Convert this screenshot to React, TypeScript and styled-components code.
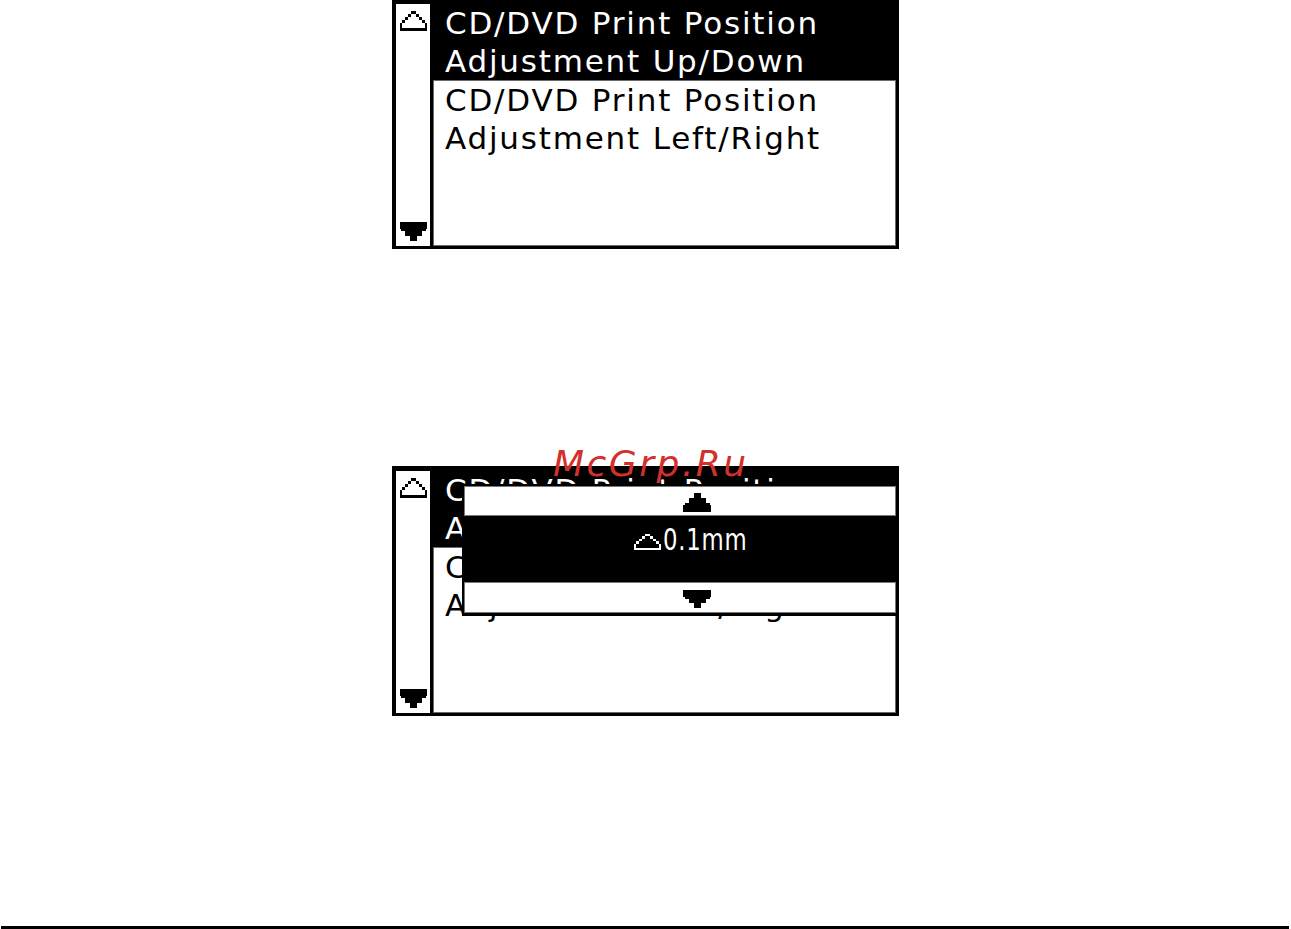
import React from "react";
import styled, { createGlobalStyle } from "styled-components";

const GlobalStyle = createGlobalStyle`
  html, body {
    margin: 0;
    padding: 0;
    background: #ffffff;
  }
  body {
    font-family: "DejaVu Sans", "Noto Sans", sans-serif;
  }
`;

const Page = styled.div`
  width: 1291px;
  height: 929px;
  display: flex;
  flex-direction: column;
  align-items: center;
  overflow: hidden;
`;

/* LCD panel: black frame, scroll track on the left, menu list on the right */
const Screen = styled.div<{ $offset: number }>`
  position: relative;
  box-sizing: border-box;
  width: 507px;
  height: 250px;
  margin-top: ${(p) => p.$offset}px;
  padding: 5px 3px 3px 4px;
  background: #000;
  display: grid;
  grid-template-columns: 34px 1fr;
`;

const ScrollTrack = styled.div`
  background: #fff;
  display: flex;
  flex-direction: column;
  justify-content: space-between;
  align-items: center;
  padding: 7px 0 5px;
  box-sizing: border-box;
`;

const MenuList = styled.div`
  display: flex;
  flex-direction: column;
  min-height: 0;
`;

const MenuItem = styled.div<{ $selected?: boolean }>`
  box-sizing: border-box;
  font-size: 31px;
  line-height: 38px;
  letter-spacing: 1.8px;
  white-space: nowrap;
  overflow: hidden;
  ${(p) =>
    p.$selected
      ? `
    flex: none;
    height: 76px;
    padding-left: 15px;
    background: #000;
    color: #fff;
  `
      : `
    flex: 1;
    margin-left: 3px;
    padding-left: 11px;
    background: #fff;
    color: #000;
    border: 1px solid #6a6a6a;
  `}
`;

const Line = styled.div`
  display: block;
`;

/* value picker that opens over the list */
const Picker = styled.div`
  position: absolute;
  left: 70px;
  top: 18px;
  right: 0;
  padding: 2px 3px 3px 2px;
  background: #000;
  display: flex;
  flex-direction: column;
`;

const StepBand = styled.div<{ $pad: number }>`
  box-sizing: border-box;
  height: ${(p) => (p.$pad === 6 ? 30 : 31)}px;
  background: #fff;
  border: 1px solid #777;
  display: flex;
  align-items: flex-start;
  padding: ${(p) => p.$pad}px 0 0 218px;
  color: #000;
`;

const ValueRow = styled.div`
  box-sizing: border-box;
  height: 66px;
  display: flex;
  align-items: baseline;
  gap: 2px;
  padding: 9px 0 0 170px;
  color: #fff;
`;

const ValueText = styled.span`
  display: inline-block;
  font-size: 30px;
  line-height: 30px;
  letter-spacing: 1px;
  transform: scaleX(0.76);
  transform-origin: left center;
`;

const Glyph = styled.svg`
  display: block;
  flex: none;
  fill: currentColor;
`;

const Watermark = styled.div`
  position: absolute;
  left: 161px;
  top: -20px;
  font-family: "DejaVu Sans", sans-serif;
  font-style: italic;
  font-size: 36px;
  line-height: 36px;
  letter-spacing: 2.5px;
  color: #d3302c;
  white-space: nowrap;
  pointer-events: none;
`;

const Spacer = styled.div`
  flex: 1;
`;

const Rule = styled.div`
  flex: none;
  align-self: stretch;
  height: 3px;
  margin: 0 2px 0 1px;
  background: #000;
`;

/* stepped LCD-style triangles */
const OUTLINE_UP =
  "M11 0h5v3h3v3h3v3h3v3h2v8h-27v-8h2v-3h3v-3h3v-3h3z M11 3h5v3h3v3h3v3h3v5h-23v-5h3v-3h3v-3h3z";
const SOLID_UP = "M10.5 0h7v5h5v5h4v2h1.5v7h-28v-7h1.5v-2h4v-5h5z";
const SOLID_DOWN = "M0 0h28v7h-1.5v2h-4v5h-5v5h-7v-5h-5v-5h-4v-2h-1.5z";

const OutlineUp = ({ w, h }: { w: number; h: number }) => (
  <Glyph width={w} height={h} viewBox="0 0 27 20" preserveAspectRatio="none" shapeRendering="crispEdges">
    <path d={OUTLINE_UP} fillRule="evenodd" />
  </Glyph>
);

const SolidUp = ({ w, h }: { w: number; h: number }) => (
  <Glyph width={w} height={h} viewBox="0 0 28 19" preserveAspectRatio="none" shapeRendering="crispEdges">
    <path d={SOLID_UP} />
  </Glyph>
);

const SolidDown = ({ w, h }: { w: number; h: number }) => (
  <Glyph width={w} height={h} viewBox="0 0 28 19" preserveAspectRatio="none" shapeRendering="crispEdges">
    <path d={SOLID_DOWN} />
  </Glyph>
);

const menu = [
  ["CD/DVD Print Position", "Adjustment Up/Down"],
  ["CD/DVD Print Position", "Adjustment Left/Right"],
];

const MenuScreen = ({ offset, children }: { offset: number; children?: React.ReactNode }) => (
  <Screen $offset={offset}>
    <ScrollTrack>
      <OutlineUp w={27} h={20} />
      <SolidDown w={27} h={19} />
    </ScrollTrack>
    <MenuList>
      {menu.map((lines, i) => (
        <MenuItem key={i} $selected={i === 0}>
          {lines.map((t) => (
            <Line key={t}>{t}</Line>
          ))}
        </MenuItem>
      ))}
    </MenuList>
    {children}
  </Screen>
);

export default function App() {
  return (
    <>
      <GlobalStyle />
      <Page>
        <MenuScreen offset={-1} />
        <MenuScreen offset={217}>
          <Picker>
            <StepBand $pad={6}>
              <SolidUp w={28} h={19} />
            </StepBand>
            <ValueRow>
              <OutlineUp w={27} h={16} />
              <ValueText>0.1mm</ValueText>
            </ValueRow>
            <StepBand $pad={7}>
              <SolidDown w={28} h={18} />
            </StepBand>
          </Picker>
          <Watermark>McGrp.Ru</Watermark>
        </MenuScreen>
        <Spacer />
        <Rule />
      </Page>
    </>
  );
}
